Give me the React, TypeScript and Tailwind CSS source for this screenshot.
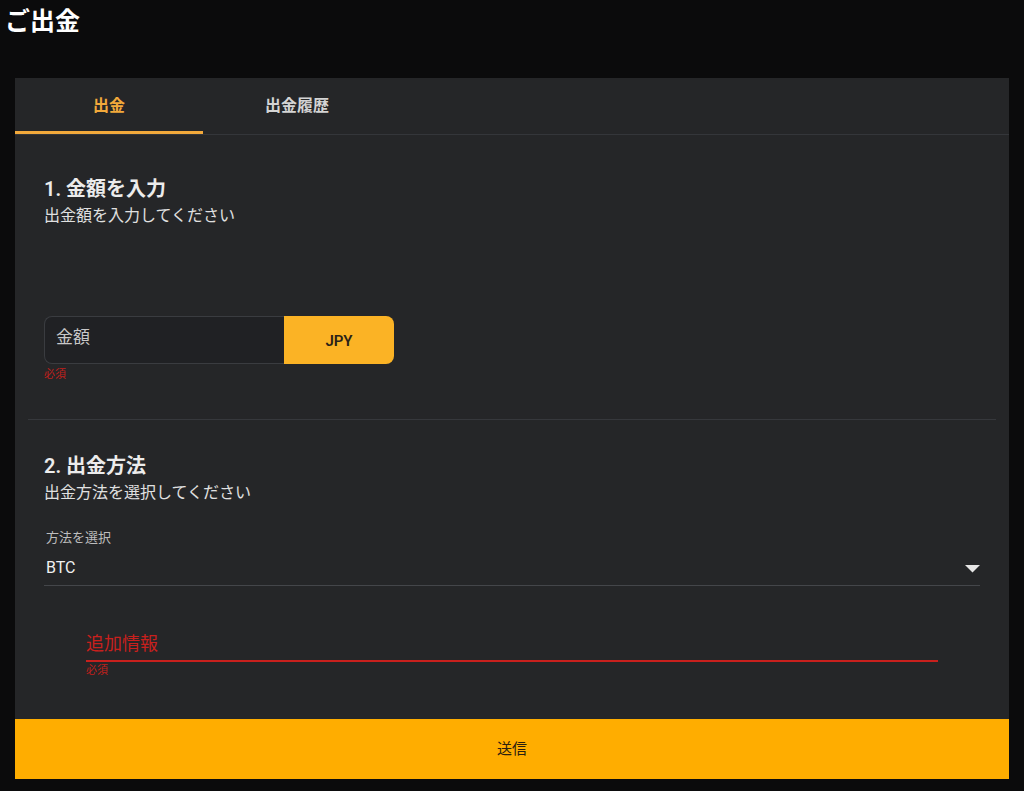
import { useState } from "react";

const FONT = "font-['Roboto','Noto_Sans_CJK_JP',sans-serif]";

function Tabs() {
  const [tab, setTab] = useState(0);
  const items = ["出金", "出金履歴"];
  return (
    <div className="flex h-[57px] border-b border-[#34363a]">
      {items.map((label, i) => (
        <button
          key={label}
          type="button"
          onClick={() => setTab(i)}
          className={
            tab === i
              ? "w-[188px] border-b-[3px] border-[#f2a93b] pt-[3px] text-[16px] font-bold text-[#f2a93b]"
              : "w-[188px] border-b-[3px] border-transparent pt-[3px] text-[16px] font-bold text-[#d4d4d4]"
          }
        >
          {label}
        </button>
      ))}
    </div>
  );
}

function AmountSection() {
  return (
    <div className="px-[29px] pt-[40px] pb-[36px]">
      <h2 className="text-[20px] leading-[28px] font-semibold text-[#ececec]">1. 金額を入力</h2>
      <p className="mt-[2px] text-[16px] leading-[22px] text-[#e0e0e0]">出金額を入力してください</p>
      <div className="mt-[89px] flex w-[350px]">
        <div className="flex h-[48px] w-[240px] items-center rounded-l-[8px] border border-r-0 border-[#3a3c40] bg-[#202124] pl-[11px] pb-[4px] text-[17px] text-[#c8c8c8]">
          金額
        </div>
        <button
          type="button"
          className="h-[48px] w-[110px] rounded-r-[8px] bg-[#fbb325] pt-[2px] text-[15px] font-semibold text-[#2a2218]"
        >
          JPY
        </button>
      </div>
      <div className="mt-[3px] text-[11px] leading-[16px] text-[#c0201c]">必須</div>
    </div>
  );
}

function MethodSection() {
  return (
    <div className="px-[29px] pt-[32px]">
      <h2 className="text-[20px] leading-[28px] font-semibold text-[#ececec]">2. 出金方法</h2>
      <p className="mt-[2px] text-[16px] leading-[22px] text-[#e0e0e0]">出金方法を選択してください</p>
      <div className="relative mt-[25px] border-b border-[#44464a] pb-[6px]">
        <div className="pl-[2px] text-[13px] leading-[18px] text-[#bdbdbd]">方法を選択</div>
        <div className="mt-[10px] pl-[2px] text-[16px] leading-[22px] text-[#f0f0f0]">BTC</div>
        <svg className="absolute right-[0px] top-[36px]" width="15" height="8" viewBox="0 0 15 8">
          <path d="M0 0 L15 0 L7.5 7.5 Z" fill="#e6e6e6" />
        </svg>
      </div>
      <div className="ml-[42px] mr-[42px] mt-[46px] pb-[40px]">
        <div className="border-b-2 border-[#c8201d] pb-[4px] text-[18px] leading-[24px] text-[#c8201d]">追加情報</div>
        <div className="mt-[1px] text-[11px] leading-[16px] text-[#c0201c]">必須</div>
      </div>
    </div>
  );
}

export default function App() {
  return (
    <div className={`min-h-screen bg-[#0b0b0c] ${FONT}`}>
      <h1 className="pl-[5px] pt-[4px] text-[25px] leading-[36px] font-bold text-white">ご出金</h1>
      <div className="mt-[38px] mx-[15px] bg-[#252628]">
        <Tabs />
        <AmountSection />
        <div className="mx-[13px] border-t border-[#36383c]" />
        <MethodSection />
        <button
          type="button"
          className="h-[60px] w-full bg-[#ffad00] text-[15px] text-[#2a2010]"
        >
          送信
        </button>
      </div>
    </div>
  );
}
